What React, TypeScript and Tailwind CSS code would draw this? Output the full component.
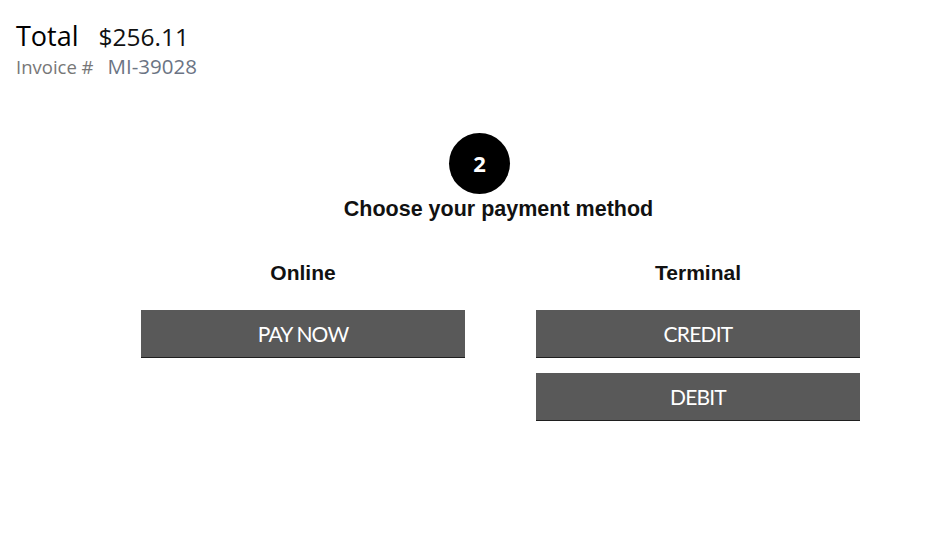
import React from "react";

const PayButton = ({ label }: { label: string }) => (
  <button className="w-[324px] h-[48px] bg-[#595959] border-b border-[#1f1f1f] text-white text-[21px] tracking-[-0.8px] font-['Lato',sans-serif]">
    {label}
  </button>
);

export default function App() {
  return (
    <div className="w-[947px] h-[536px] bg-white">
      {/* Header */}
      <div className="pl-4 pt-[18px] font-['Open_Sans',sans-serif]">
        <div className="flex items-baseline">
          <span className="text-[27px] leading-[36px] text-black">Total</span>
          <span className="ml-[20px] text-[24.5px] leading-[36px] text-[#111]">$256.11</span>
        </div>
        <div className="flex items-baseline -mt-[1px]">
          <span className="text-[18.5px] leading-[24px] text-[#777]">Invoice #</span>
          <span className="ml-[14px] text-[20.5px] leading-[24px] text-[#6b7484]">MI-39028</span>
        </div>
      </div>

      {/* Step */}
      <div className="flex flex-col items-center mt-[54px] pl-[50px] font-['Liberation_Sans',sans-serif]">
        <div className="w-[61px] h-[61px] rounded-full bg-black text-white flex items-center justify-center text-[22px] font-bold font-['Open_Sans',sans-serif] -ml-[38px]">
          2
        </div>
        <h2 className="mt-[1px] text-[21.5px] leading-[28px] font-bold text-[#111]">Choose your payment method</h2>
      </div>

      {/* Methods */}
      <div className="flex justify-center gap-[71px] mt-[36px] pl-[54px] font-['Liberation_Sans',sans-serif]">
        <div className="flex flex-col items-center w-[324px]">
          <h3 className="text-[21px] leading-[28px] font-bold text-[#111]">Online</h3>
          <div className="mt-[23px]">
            <PayButton label="PAY NOW" />
          </div>
        </div>
        <div className="flex flex-col items-center w-[324px] gap-[15px]">
          <h3 className="text-[21px] leading-[28px] font-bold text-[#111] mb-[8px]">Terminal</h3>
          <PayButton label="CREDIT" />
          <PayButton label="DEBIT" />
        </div>
      </div>
    </div>
  );
}
